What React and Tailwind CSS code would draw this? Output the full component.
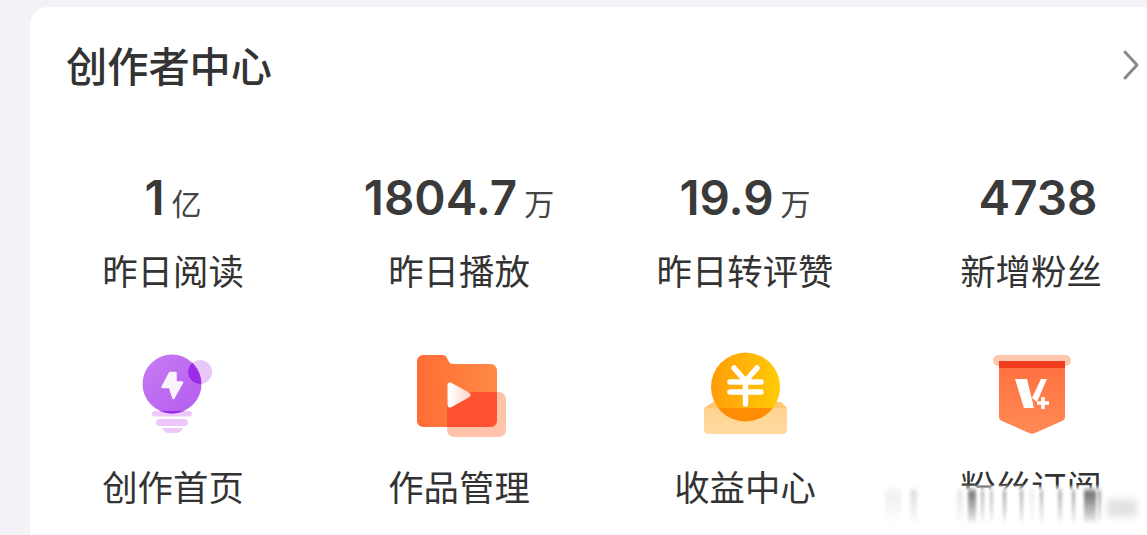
function Bulb() {
  return (
    <svg width="100" height="100" viewBox="0 0 100 100">
      <defs>
        <linearGradient id="b1" x1="0" y1="0" x2="1" y2="1"><stop offset="0" stopColor="#c77bf2" /><stop offset="1" stopColor="#b45cf0" /></linearGradient>
        <clipPath id="bc"><circle cx="49" cy="41" r="29.5" /></clipPath>
      </defs>
      <rect x="29" y="68" width="40" height="5.5" rx="2.75" fill="#eec8fa" />
      <rect x="33" y="76" width="32" height="7" rx="3.5" fill="#eec8fa" />
      <path d="M39 85h21c-1 3-4 5-7 5h-7c-3 0-6-2-7-5z" fill="#eec8fa" />
      <circle cx="49" cy="41" r="29.5" fill="url(#b1)" />
      <circle cx="77" cy="29" r="12" fill="#e9c8f9" />
      <g clipPath="url(#bc)">
        <circle cx="77" cy="29" r="12" fill="#9a2be8" />
        <rect x="29" y="68" width="40" height="5.5" fill="#9a2be8" />
      </g>
      <path d="M47 30 L39.5 44 H47 L50.5 55 L59 39.5 H52.5 L52.5 30 Z" fill="#fff" stroke="#fff" strokeWidth="2.5" strokeLinejoin="round" opacity="0.93" />
    </svg>
  );
}
function Folder() {
  return (
    <svg width="100" height="100" viewBox="0 0 100 100">
      <defs>
        <linearGradient id="f1" x1="0" y1="0" x2="1" y2="0"><stop offset="0" stopColor="#ff6d35" /><stop offset="1" stopColor="#ff8a45" /></linearGradient>
        <linearGradient id="p1" x1="0" y1="0" x2="1" y2="0"><stop offset="0" stopColor="#ffffff" /><stop offset="1" stopColor="#ffd9cc" /></linearGradient>
        <clipPath id="fc"><path d="M14 12h20c2 0 3 1 4 3l2 4c1 1 2 2 4 2h38c3 0 6 3 6 6v51c0 3-3 6-6 6H14c-3 0-6-3-6-6V18c0-3 3-6 6-6z" /></clipPath>
      </defs>
      <path d="M14 12h20c2 0 3 1 4 3l2 4c1 1 2 2 4 2h38c3 0 6 3 6 6v51c0 3-3 6-6 6H14c-3 0-6-3-6-6V18c0-3 3-6 6-6z" fill="url(#f1)" />
      <rect x="38" y="49" width="59" height="45" rx="7" fill="#ffc3ab" />
      <g clipPath="url(#fc)"><rect x="38" y="49" width="59" height="45" rx="7" fill="#ff5230" /></g>
      <path d="M41 42 L59 52 L41 62 Z" fill="url(#p1)" stroke="url(#p1)" strokeWidth="5" strokeLinejoin="round" />
    </svg>
  );
}
function Coin() {
  return (
    <svg width="100" height="100" viewBox="0 0 100 100">
      <defs>
        <linearGradient id="c1" x1="0" y1="0" x2="1" y2="0"><stop offset="0" stopColor="#ff9d0a" /><stop offset="1" stopColor="#ffcb05" /></linearGradient>
        <linearGradient id="e1" x1="0" y1="0" x2="0" y2="1"><stop offset="0" stopColor="#ffd48f" /><stop offset="1" stopColor="#ffd9a0" /></linearGradient>
        <clipPath id="cc"><circle cx="50.5" cy="44" r="34.5" /></clipPath>
      </defs>
      <path d="M9 65 L18 59 H86 L92 65 V86 C92 89 90 91 87 91 H14 C11 91 9 89 9 86 Z" fill="#ffc872" />
      <circle cx="50.5" cy="44" r="34.5" fill="url(#c1)" />
      <path d="M9 65 H92 V86 C92 89 90 91 87 91 H14 C11 91 9 89 9 86 Z" fill="url(#e1)" />
      <g clipPath="url(#cc)"><rect x="9" y="65" width="83" height="26" fill="#ff8c05" /></g>
      <path d="M39 25 L50.5 38 L62 25 M35 39 H66 M35 49 H66 M50.5 38 V61" fill="none" stroke="#fff" strokeWidth="5.5" strokeLinecap="round" strokeLinejoin="round" />
    </svg>
  );
}
function Badge() {
  return (
    <svg width="100" height="100" viewBox="0 0 100 100">
      <defs>
        <linearGradient id="v1" x1="0" y1="0" x2="0" y2="1"><stop offset="0" stopColor="#ff6f3e" /><stop offset="1" stopColor="#ff8a55" /></linearGradient>
      </defs>
      <rect x="12" y="12" width="78" height="11" rx="5.5" fill="#ffc6ae" />
      <path d="M18 18 H84 V74 C84 76 83 77 81 78 L54 90 C52 91 50 91 48 90 L21 78 C19 77 18 76 18 74 Z" fill="url(#v1)" />
      <rect x="18" y="18" width="66" height="7" fill="#f03c1c" />
      <path d="M34 36 H46 L53 65 H43 Z" fill="#fff" />
      <path d="M56 59 L66 36 H60 L51 55 Z" fill="#fff" />
      <path d="M62 54 V66 M56 60 H68" stroke="#fff" strokeWidth="3.5" fill="none" />
    </svg>
  );
}
const stats = [
  { v: "1", u: "亿", l: "昨日阅读" },
  { v: "1804.7", u: "万", l: "昨日播放" },
  { v: "19.9", u: "万", l: "昨日转评赞" },
  { v: "4738", u: "", l: "新增粉丝", pad: true },
];
const tools = [
  { I: Bulb, l: "创作首页" },
  { I: Folder, l: "作品管理" },
  { I: Coin, l: "收益中心" },
  { I: Badge, l: "粉丝订阅" },
];
const streaks = [
  [885, 16, 0.08], [910, 7, 0.16], [957, 6, 0.12], [968, 8, 0.7], [981, 3, 0.4], [990, 3, 0.35],
  [1003, 3, 0.5], [1020, 3, 0.45], [1030, 4, 0.1], [1040, 3, 0.4], [1058, 4, 0.4], [1072, 3, 0.5],
  [1084, 12, 0.75], [1098, 3, 0.5],
];
export default function App() {
  return (
    <div className="relative h-[535px] w-[1147px] overflow-hidden bg-[#f2f2f7] pl-[30px] pt-[7px] font-['Noto_Sans_CJK_SC','Noto_Sans',sans-serif] text-[#333]">
      <div className="h-[560px] w-[1144px] rounded-[18px] bg-white pt-[27px]">
        <div className="flex h-[60px] items-center justify-between pl-[36px] pr-[42px]">
          <span className="text-[41.2px] font-medium leading-[60px] text-[#333]">创作者中心</span>
          <svg width="20" height="32" viewBox="0 0 20 32" className="-mr-[10px] mt-[1px]">
            <path d="M3 3 L15 16 L3 29" fill="none" stroke="#8a8a8a" strokeWidth="3" strokeLinecap="round" strokeLinejoin="round" />
          </svg>
        </div>
        <div className="mt-[74px] grid w-full grid-cols-4">
          {stats.map((s) => (
            <div key={s.l} className="flex flex-col items-center">
              <div className={"flex h-[60px] items-baseline justify-center gap-[7px] " + (s.pad ? "pl-[14px]" : "")}>
                <span className="font-['Inter',sans-serif] text-[47.5px] font-semibold leading-[60px] text-[#3a3a3a]">{s.v}</span>
                {s.u ? <span className="text-[30px] leading-[60px] text-[#444]">{s.u}</span> : null}
              </div>
              <div className="mt-[20px] text-[35.4px] leading-[44px] text-[#333]">{s.l}</div>
            </div>
          ))}
        </div>
        <div className="mt-[51px] grid w-full grid-cols-4">
          {tools.map(({ I, l }) => (
            <div key={l} className="flex flex-col items-center">
              <I />
              <div className="mt-[21px] text-[35.4px] leading-[44px] text-[#333]">{l}</div>
            </div>
          ))}
        </div>
      </div>
      <svg className="absolute left-[870px] top-[484px]" width="277" height="51" viewBox="870 484 277 51">
        <defs>
          <filter id="wb" x="-50%" y="-30%" width="200%" height="160%"><feGaussianBlur stdDeviation="1.6 2.5" /></filter>
          <filter id="wb2" x="-30%" y="-30%" width="160%" height="160%"><feGaussianBlur stdDeviation="3.5" /></filter>
          <linearGradient id="wm" x1="0" y1="0" x2="0" y2="1"><stop offset="0" stopColor="#fff" stopOpacity="0" /><stop offset="0.12" stopColor="#fff" /><stop offset="1" stopColor="#fff" /></linearGradient>
          <linearGradient id="st" x1="0" y1="0" x2="0" y2="1"><stop offset="0" stopColor="#333" /><stop offset="1" stopColor="#ddd" /></linearGradient>
        </defs>
        <rect x="870" y="484" width="277" height="51" fill="url(#wm)" />
        <g filter="url(#wb)">
          {streaks.map(([x, w, o]) => (
            <rect key={x} x={x} y="490" width={w} height="31" fill="url(#st)" opacity={o} />
          ))}
        </g>
        <rect x="1107" y="499" width="30" height="18" rx="4" fill="#e2e2e2" filter="url(#wb2)" />
      </svg>
    </div>
  );
}
